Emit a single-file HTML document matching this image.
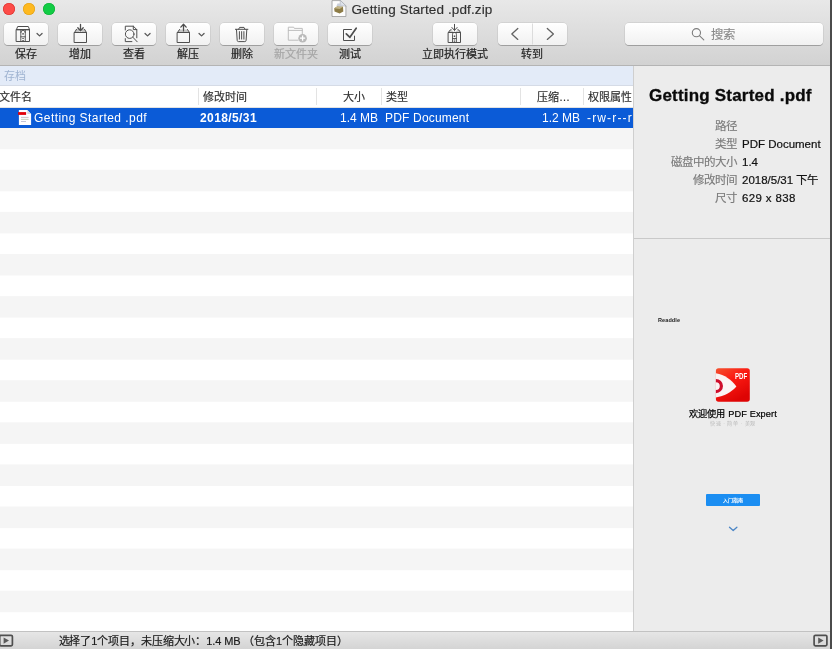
<!DOCTYPE html>
<html lang="zh-CN">
<head>
<meta charset="utf-8">
<title>Getting Started .pdf.zip</title>
<style>
*{box-sizing:border-box;margin:0;padding:0}
html,body{width:832px;height:649px;overflow:hidden}
body{position:relative;background:#ececec;font-family:"Liberation Sans",sans-serif;font-size:12px;color:#262626}
.abs{position:absolute}
/* toolbar */
#toolbar{left:0;top:0;width:832px;height:66px;background:linear-gradient(#e8e8e8,#d2d2d2);border-bottom:1px solid #b4b4b4}
.tl{width:12px;height:12px;border-radius:50%;top:3px}
#title{top:1.5px;left:351.5px;font-size:13.5px;line-height:16px;color:#303030;white-space:nowrap;letter-spacing:.12px;-webkit-text-stroke:.15px #303030}
.btn{top:23px;height:22px;width:44px;border-radius:4px;background:linear-gradient(#ffffff,#f1f1f1);box-shadow:0 0 0 0.5px rgba(0,0,0,.12),0 1px 0.5px rgba(0,0,0,.22)}
.lbl{top:47px;width:90px;text-align:center;font-size:11px;line-height:14px;color:#242424;white-space:nowrap;-webkit-text-stroke:.2px #242424}
.dis{color:#a6a6a6;-webkit-text-stroke:.2px #a6a6a6}
/* list */
#pathbar{left:0;top:66px;width:634px;height:20px;background:#e3ebf8;border-bottom:1px solid #d5dbe6;color:#9fb3d1;font-size:11px;line-height:20px;padding-left:4px}
#thead{left:0;top:86px;width:633px;height:22px;background:#fff;border-bottom:1px solid #e2e2e2;font-size:11px;line-height:20px;color:#2d2d2d}
#thead span{position:absolute;top:.5px;white-space:nowrap;-webkit-text-stroke:.15px #2d2d2d}
.cd{position:absolute;top:2px;width:1px;height:17px;background:#e3e3e3}
#rows{left:0;top:108px;width:633px;height:523px;background:#fff repeating-linear-gradient(#f5f5f5 0,#f5f5f5 21.05px,#fff 21.05px,#fff 42.1px) 0 19.7px/100% 42.1px repeat-y;overflow:hidden}
.st{position:absolute;left:0;width:633px;background:#f5f5f5}
#sel{left:0;top:108px;width:633px;height:19.6px;background:#0b5bd7;color:#fff;font-size:12px;line-height:20px;overflow:hidden}
#sel span{position:absolute;top:0;white-space:nowrap}
#split{left:633px;top:66px;width:1px;height:565px;background:#cfcfcf}
/* right panel */
#panel{left:634px;top:66px;width:196px;height:565px;background:#ececec}
#ptitle{left:649px;top:85.5px;font-size:17px;line-height:20px;font-weight:bold;color:#0a0a0a;white-space:nowrap;letter-spacing:.2px;-webkit-text-stroke:.3px #0a0a0a}
.il{left:634px;width:103px;text-align:right;color:#7a7a7a;font-size:11.5px;line-height:18px;white-space:nowrap;-webkit-text-stroke:.15px #7a7a7a}
.iv{left:742px;color:#101010;font-size:11.5px;line-height:18px;white-space:nowrap;-webkit-text-stroke:.2px #101010}
#hr{left:634px;top:238px;width:196px;height:1px;background:#c9c9c9}
/* status */
#status{left:0;top:631px;width:832px;height:18px;background:linear-gradient(#e6e6e6,#d4d4d4);border-top:1px solid #c2c2c2;font-size:11px;line-height:17px;color:#1c1c1c}
#edge{left:830px;top:0;width:2px;height:649px;background:#4b4b4b}
</style>
</head>
<body>
<div id="wrap" style="position:absolute;left:0;top:0;width:832px;height:649px;will-change:transform">
<div id="toolbar" class="abs"></div>
<div class="abs tl" style="left:3px;background:#fd4c48;box-shadow:inset 0 0 0 .6px #d8332f"></div>
<div class="abs tl" style="left:23px;background:#feb91f;box-shadow:inset 0 0 0 .6px #e0a018"></div>
<div class="abs tl" style="left:43px;background:#12cc45;box-shadow:inset 0 0 0 .6px #0fae36"></div>
<div id="title" class="abs">Getting Started .pdf.zip</div>

<div class="abs btn" style="left:4px"></div>
<div class="abs btn" style="left:58px"></div>
<div class="abs btn" style="left:112px"></div>
<div class="abs btn" style="left:166px"></div>
<div class="abs btn" style="left:220px"></div>
<div class="abs btn" style="left:274px"></div>
<div class="abs btn" style="left:328px"></div>
<div class="abs btn" style="left:433px"></div>
<div class="abs btn" style="left:498px;width:69px"></div>
<div class="abs btn" style="left:625px;width:198px"></div>

<div class="abs lbl" style="left:-19px">保存</div>
<div class="abs lbl" style="left:35px">增加</div>
<div class="abs lbl" style="left:89px">查看</div>
<div class="abs lbl" style="left:143px">解压</div>
<div class="abs lbl" style="left:197px">删除</div>
<div class="abs lbl dis" style="left:251px">新文件夹</div>
<div class="abs lbl" style="left:305px">测试</div>
<div class="abs lbl" style="left:410px">立即执行模式</div>
<div class="abs lbl" style="left:487px">转到</div>

<div id="pathbar" class="abs">存档</div>
<div id="thead" class="abs">
  <span style="left:-1px">文件名</span>
  <span style="left:203px">修改时间</span>
  <span style="left:316px;width:49px;text-align:right">大小</span>
  <span style="left:386px">类型</span>
  <span style="left:521px;width:49px;text-align:right">压缩…</span>
  <span style="left:588px">权限属性</span>
  <i class="cd" style="left:198px"></i><i class="cd" style="left:316px"></i><i class="cd" style="left:381px"></i><i class="cd" style="left:520px"></i><i class="cd" style="left:583px"></i>
</div>
<div id="rows" class="abs"></div>
<div id="sel" class="abs">
  <span style="left:34px;letter-spacing:.45px">Getting Started .pdf</span>
  <span style="left:200px;font-weight:bold;letter-spacing:.4px">2018/5/31</span>
  <span style="left:316px;width:62px;text-align:right">1.4 MB</span>
  <span style="left:385px;letter-spacing:.18px">PDF Document</span>
  <span style="left:521px;width:59px;text-align:right">1.2 MB</span>
  <span style="left:587px;letter-spacing:1.150px">-rw-r--r--</span>
</div>
<div id="split" class="abs"></div>

<div id="panel" class="abs"></div>
<div id="ptitle" class="abs">Getting Started .pdf</div>
<div class="abs il" style="top:117px">路径</div>
<div class="abs il" style="top:135px">类型</div><div class="abs iv" style="top:135px">PDF Document</div>
<div class="abs il" style="top:153px">磁盘中的大小</div><div class="abs iv" style="top:153px">1.4</div>
<div class="abs il" style="top:171px">修改时间</div><div class="abs iv" style="top:171px">2018/5/31 下午</div>
<div class="abs il" style="top:189px">尺寸</div><div class="abs iv" style="top:189px;letter-spacing:.35px">629 x 838</div>
<div id="hr" class="abs"></div>
<div class="abs" style="left:658px;top:316px;font-size:5.5px;line-height:8px;font-weight:bold;color:#222;white-space:nowrap;letter-spacing:.1px">Readdle</div>
<div class="abs" style="left:734.500px;top:371.500px;font-size:8.500px;line-height:8px;font-weight:bold;color:#fff;white-space:nowrap;transform:scaleX(.72);transform-origin:0 0;z-index:3">PDF</div>
<div class="abs" style="left:634px;width:198px;top:408px;text-align:center;font-size:9.200px;line-height:12px;color:#000;white-space:nowrap;letter-spacing:.12px;-webkit-text-stroke:.2px #000">欢迎使用 PDF Expert</div>
<div class="abs" style="left:634px;width:198px;top:420px;text-align:center;font-size:5px;line-height:7px;color:#b8b8b8;white-space:nowrap;letter-spacing:.6px">快速 · 简单 · 美观</div>
<div class="abs" style="left:706px;top:493.500px;width:54px;height:12px;background:#1b8ef2;border-radius:1px;color:#fff;font-size:5px;line-height:12px;text-align:center;font-weight:bold;white-space:nowrap">入门指南</div>
<div class="abs" style="left:625px;width:198px;top:26.500px;font-size:12.400px;line-height:16px;color:#8a8a8a;white-space:nowrap;padding-left:85.600px;-webkit-text-stroke:.15px #8a8a8a">搜索</div>


<div id="status" class="abs"><span style="position:absolute;left:58.500px;top:1px;white-space:nowrap;letter-spacing:-.1px;-webkit-text-stroke:.2px #1c1c1c">选择了1个项目，未压缩大小：1.4 MB （包含1个隐藏项目）</span></div>

<svg class="abs" style="left:0;top:0" width="832" height="649" viewBox="0 0 832 649" fill="none" stroke="#4e4e4e" stroke-width="1" stroke-linecap="round" stroke-linejoin="round">
<defs>
<linearGradient id="gr" x1="0" y1="0" x2="0.55" y2="1"><stop offset="0" stop-color="#f4522f"/><stop offset="0.45" stop-color="#fb1a12"/><stop offset="1" stop-color="#de0404"/></linearGradient>
</defs>
<!-- title icon -->
<g stroke="none">
<path d="M332.4 0.6h7.8l5.7 5.4v10.5h-13.5z" fill="#fdfdfd" stroke="#8d8d8d" stroke-width=".7"/>
<path d="M340.2 0.6v5.4h5.7z" fill="#dfe4ec" stroke="#9aa0a8" stroke-width=".5"/>
<path d="M334.2 8.2l3.2-2 5.6.6.3 4.6-3.6 2.2-5.2-2z" fill="#8d7c46"/>
<path d="M334.2 8.2l5.4.9 3.4-2.3-5.6-.6z" fill="#c2b486"/>
<path d="M336.5 6l1-2.6h3.6l.6 3z" fill="#c9ced8"/>
</g>
<!-- save icon -->
<path d="M16.500 29.500l1.200-3h10.600l1.200 3z"/>
<rect x="16.500" y="29.500" width="13" height="12"/>
<path d="M20.800 41.500v-12M25.300 41.500v-12" stroke-width=".9"/>
<path d="M20.800 32.600a2.250 2.250 0 0 1 4.500 0M20.800 36.800h4.500" stroke-width=".9"/>
<rect x="22.300" y="33.100" width="1.500" height="1.500" fill="#4e4e4e" stroke="none"/>
<path d="M23.050 38v3.400" stroke-dasharray="1 1" stroke-linecap="butt" stroke-width="1.400"/>
<path d="M37.05 33.500l2.500 2.400 2.500-2.400" stroke="#585858" stroke-width="1.300"/>
<!-- add icon -->
<path d="M74.500 32.500l2-3.200h2.800v2.100l1.200 1.100h0l1.200-1.100v-2.100h2.800l2 3.200z" fill="#c4c4c4" stroke="none"/>
<path d="M74.500 32.500l2-3.200M86.500 32.500l-2-3.200"/>
<rect x="74.500" y="32.500" width="12" height="10"/>
<path d="M80.500 24.300v6.200M77.800 27.800l2.700 2.900 2.700-2.900" stroke-width="1.300"/>
<!-- view icon -->
<path d="M125.3 30v-3.8h8l3.5 3.4v8.2M125.3 38.6v3h6.6M133.3 26.2v3.4h3.5"/>
<circle cx="129.7" cy="34.1" r="4.3"/>
<path d="M132.9 37.3l4.3 4.5"/>
<path d="M145.05 33.500l2.500 2.400 2.500-2.400" stroke="#585858" stroke-width="1.300"/>
<!-- extract icon -->
<path d="M177.500 32.500l2-3h3.300v1.600h1.400v-1.600h3.300l2 3z" fill="#c4c4c4" stroke="none"/>
<path d="M177.500 32.500l2-3M189.500 32.500l-2-3"/>
<rect x="177.500" y="32.500" width="12" height="10"/>
<path d="M183.500 30.900v-6.400M180.800 27.100l2.700-2.800 2.700 2.800" stroke-width="1.300"/>
<path d="M199.05 33.500l2.500 2.400 2.500-2.400" stroke="#585858" stroke-width="1.300"/>
<!-- trash icon -->
<path d="M235.4 29.3h12.5M238.6 29.3l1-1.9h4.4l1 1.9M236.5 29.6l.7 10.8q.1 1.2 1.3 1.2h6.300q1.200 0 1.300-1.200l.7-10.800"/>
<path d="M239.4 31.6v7.500M241.65 31.600v7.500M243.900 31.600v7.500"/>
<!-- new folder (disabled) -->
<g stroke="#bdbdbd">
<path d="M298.200 40.200h-9.900v-13h5.400l.6 1.200h8v6"/>
<path d="M288.300 30.400h14"/>
<circle cx="302.600" cy="38.200" r="4.300" fill="#b9b9b9" stroke="none"/>
<path d="M302.600 35.600v5.200M300 38.200h5.200" stroke="#fff" stroke-width="1.300" stroke-linecap="butt"/>
</g>
<!-- test icon -->
<path d="M351.500 29.500h-8v11h11v-4.400"/>
<path d="M346.300 33.900l3.600 3.400 6.300-9.100" stroke-width="1.700"/>
<!-- immediate mode icon -->
<path d="M448.500 32.500q.4-2.300 2.600-3l2.500 2.400 .9.600 .9-.6 2.500-2.400q2.200.7 2.600 3z" fill="#cdcdcd" stroke="none"/>
<path d="M448.500 32.500q.4-2.300 2.600-3M460.500 32.500q-.4-2.300-2.600-3"/>
<rect x="448.500" y="32.500" width="12" height="10"/>
<path d="M452.500 42.500v-8.300a1.950 1.950 0 0 1 3.900 0v8.300M452.500 38.500h3.900" stroke-width=".9"/>
<rect x="453.750" y="35.500" width="1.400" height="1.500" fill="#4e4e4e" stroke="none"/>
<path d="M454.450 39.500v2.800" stroke-dasharray="1 0.800" stroke-linecap="butt" stroke-width="1.300"/>
<path d="M454.500 24.300v6.100M451.900 27.500l2.600 2.900 2.600-2.900"/>
<!-- nav -->
<path d="M532.500 23.500v21" stroke="#dcdcdc" stroke-linecap="butt"/>
<path d="M517.800 28.400l-6 5.500 6 5.500M547.300 28.400l6.100 5.500-6.100 5.500" stroke="#626262" stroke-width="1.300"/>
<!-- search icon -->
<g stroke="#7d7d7d" stroke-width="1.100"><circle cx="696.400" cy="32.700" r="4.100"/><path d="M699.400 35.700l4.400 4.200"/></g>
<!-- file icon in row -->
<g stroke="none">
<path d="M18.900 110.100h8.400l3.800 3.800v11.100h-12.200z" fill="#fdfdff"/>
<path d="M27.300 110.100v3.800h3.800z" fill="#d4d8e2"/>
<rect x="18.100" y="112.100" width="8" height="2.800" fill="#e10008"/>
<rect x="21" y="116.900" width="7.600" height=".8" fill="#b9b3b6"/>
<rect x="21" y="118.900" width="7.600" height=".8" fill="#b5c3ad"/>
<rect x="21" y="121" width="5" height=".8" fill="#b4b4cc"/>
</g>
<!-- status play boxes -->
<g stroke="#4f4f4f" stroke-width="1.700" stroke-linejoin="miter">
<rect x="-0.300" y="635.300" width="12.700" height="10.600" rx="1.300"/>
<rect x="814.100" y="635.300" width="12.800" height="10.600" rx="1.300"/>
</g>
<path d="M3.600 637.400l5.400 3.200-5.400 3.200z" fill="#5a5a5a" stroke="none"/>
<path d="M818.200 637.400l5.400 3.200-5.400 3.200z" fill="#5a5a5a" stroke="none"/>
<!-- PDF expert logo -->
<g stroke="none">
<rect x="715.900" y="368.200" width="33.900" height="33.500" rx="2.600" fill="url(#gr)"/>
<path d="M715.900 373.300c9 1.500 15.500 6.500 20.500 13.100c-5.500 6-12 9.600-20.500 11z" fill="#fbf3f3"/>
<path d="M715.900 379a7.100 7.100 0 0 1 0 14.200l0-3.200a3.900 3.900 0 0 0 0-7.800z" fill="#cf0d2b"/>
</g>
<!-- chevron in preview -->
<path d="M729.500 527.200l3.700 3.400 3.700-3.400" stroke="#4c86c6" stroke-width="1.300"/>
</svg>
<div id="edge" class="abs"></div>
</div>
</body>
</html>
